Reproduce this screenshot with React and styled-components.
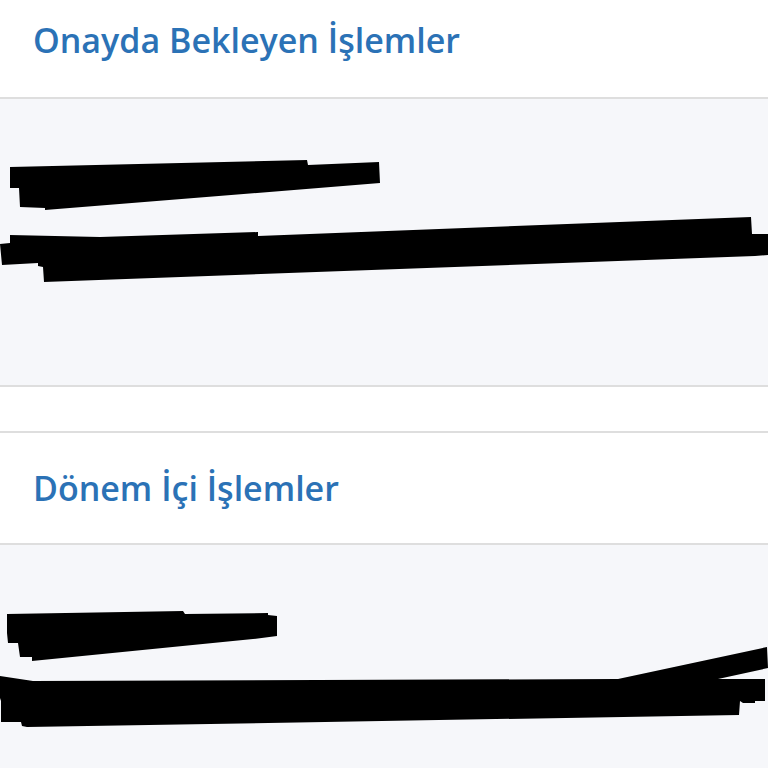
import React from "react";
import styled, { createGlobalStyle } from "styled-components";

const Global = createGlobalStyle`
  html, body { margin: 0; padding: 0; background: #ffffff; }
  body { font-family: "Open Sans", "Noto Sans", sans-serif; overflow: hidden; }
`;

const Page = styled.div`
  display: flex;
  flex-direction: column;
  width: 768px;
  height: 768px;
  overflow: hidden;
`;

const Section = styled.section`
  display: flex;
  flex-direction: column;
  background: #ffffff;
  border-top: ${(p) => (p.$cropped ? "none" : "2px solid #dedede")};
  margin-top: ${(p) => (p.$cropped ? "0" : "44px")};
`;

const Header = styled.header`
  display: flex;
  align-items: center;
  height: ${(p) => (p.$cropped ? "99px" : "112px")};
  padding: ${(p) => (p.$cropped ? "0 33px 17px" : "0 33px")};
  box-sizing: border-box;
  border-bottom: 2px solid #dedede;
`;

const Title = styled.h2`
  margin: 0;
  font-family: "Open Sans", "Noto Sans", sans-serif;
  font-weight: 600;
  font-size: 34px;
  color: #2b72b6;
  letter-spacing: 0;
`;

const Body = styled.div`
  position: relative;
  height: ${(p) => p.$h}px;
  background: #f6f7fa;
  border-bottom: ${(p) => (p.$open ? "none" : "2px solid #dedede")};
`;

const Redaction = styled.svg`
  position: absolute;
  inset: 0;
  width: 100%;
  height: 100%;
`;

const shift = (pts, dy) =>
  pts.map(([x, y]) => `${x},${y - dy}`).join(" ");

const r1 = [
  [10, 167], [307, 160], [308, 165], [379, 162], [380, 183], [45, 210],
  [45, 208], [20, 207], [19, 188], [10, 188],
];
const r2 = [
  [10, 235], [100, 237], [258, 232], [258, 236], [751, 217], [752, 234],
  [768, 234], [768, 255], [755, 256], [44, 282], [43, 267], [38, 266],
  [38, 263], [2, 265], [0, 244], [10, 243],
];
const r3 = [
  [7, 614], [183, 611], [185, 614], [268, 613], [268, 615], [277, 616],
  [277, 636], [253, 639], [32, 661], [32, 657], [20, 657], [18, 643],
  [8, 643], [7, 633],
];
const r4 = [
  [0, 676], [33, 681], [618, 679], [767, 647], [768, 668], [718, 679],
  [765, 679], [765, 701], [755, 701], [755, 703], [743, 703], [740, 701],
  [739, 715], [27, 727], [22, 726], [21, 722], [1, 722], [1, 701], [0, 698],
];

export default function App() {
  return (
    <Page>
      <Global />
      <Section $cropped>
        <Header $cropped>
          <Title>Onayda Bekleyen İşlemler</Title>
        </Header>
        <Body $h={286}>
          <Redaction viewBox="0 0 768 286" preserveAspectRatio="none">
            <polygon points={shift(r1, 99)} fill="#000" />
            <polygon points={shift(r2, 99)} fill="#000" />
          </Redaction>
        </Body>
      </Section>
      <Section>
        <Header>
          <Title>Dönem İçi İşlemler</Title>
        </Header>
        <Body $h={240} $open>
          <Redaction viewBox="0 0 768 240" preserveAspectRatio="none">
            <polygon points={shift(r3, 545)} fill="#000" />
            <polygon points={shift(r4, 545)} fill="#000" />
          </Redaction>
        </Body>
      </Section>
    </Page>
  );
}
